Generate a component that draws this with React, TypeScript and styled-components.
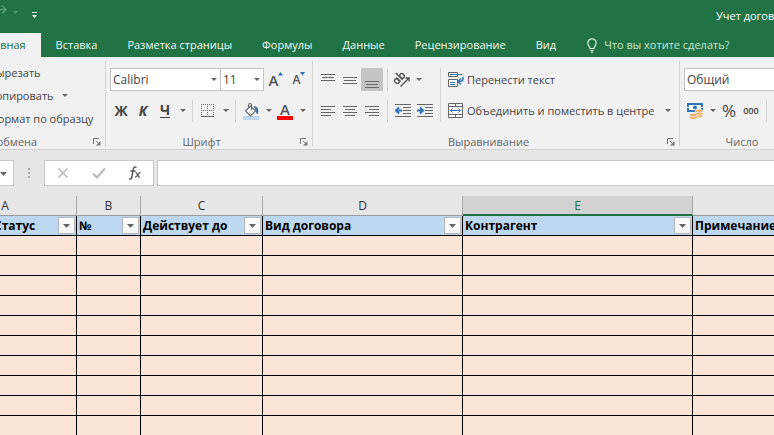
import React from "react";
import styled, { createGlobalStyle, css } from "styled-components";

const green = "#217346";
const ink = "#444444";
const stroke = "#666666";
const blue = "#2e75b6";

const GlobalStyle = createGlobalStyle`
  *, *::before, *::after { box-sizing: border-box; }
  html, body { margin: 0; height: 100%; overflow: hidden; background: #e6e6e6; }
  body, button, input, select {
    font-family: "Open Sans", "Noto Sans", sans-serif;
    font-size: 11px;
    line-height: 16px;
    color: ${ink};
  }
  button, input, select { margin: 0; padding: 0; border: 0; border-radius: 0; background: none; }
`;

const Window = styled.div`
  display: flex;
  flex-direction: column;
  min-height: 100vh;
  overflow: hidden;
`;

const TitleBar = styled.header`
  display: flex;
  justify-content: space-between;
  height: 33px;
  background: ${green};
  color: #ffffff;
`;

const QuickAccess = styled.div`
  display: flex;
  align-items: flex-start;
`;

const QuickButton = styled.button<{ $width: number }>`
  display: flex;
  width: ${(p) => p.$width}px;
  height: 24px;
`;

const Title = styled.h1`
  width: 58px;
  margin: 8px 0 0;
  overflow: hidden;
  white-space: nowrap;
  font-size: 11px;
  font-weight: 400;
`;

const Tabs = styled.nav`
  display: flex;
  height: 24px;
  margin-left: -33px;
  background: ${green};
`;

const Tab = styled.button<{ $active?: boolean }>`
  flex: none;
  padding: 0 15px;
  white-space: nowrap;
  color: ${(p) => (p.$active ? green : "#f0f8f3")};
  background: ${(p) => (p.$active ? "#f1f1f1" : "transparent")};
`;

const TellMe = styled.button`
  display: flex;
  align-items: center;
  gap: 7px;
  padding-left: 16px;
  white-space: nowrap;
  color: #c3e6d0;
`;

const Ribbon = styled.div`
  display: flex;
  height: 93px;
  margin-left: -92px;
  padding-top: 4px;
  background: #f1f1f1;
  border-bottom: 1px solid #d0d0d0;
`;

const Group = styled.section<{ $width: number; $indent: number }>`
  display: flex;
  flex: none;
  flex-direction: column;
  justify-content: space-between;
  width: ${(p) => p.$width}px;
  height: 85px;
  padding: 7px 0 0 ${(p) => p.$indent}px;
  border-right: 1px solid #d4d4d4;
`;

const Caption = styled.footer<{ $indent: number }>`
  display: flex;
  align-items: center;
  height: 16px;
  margin: 0 2px -4px -${(p) => p.$indent}px;
  color: #666666;
`;

const CaptionText = styled.span`
  flex: 1;
  text-align: center;
`;

const Launcher = styled.button`
  display: flex;
  width: 13px;
  justify-content: center;
`;

const CommandList = styled.div`
  display: flex;
  flex-direction: column;
  margin-top: -7px;
`;

const CommandRow = styled.div`
  display: flex;
  align-items: center;
  gap: 5px;
  height: 23px;
`;

const Command = styled.button`
  white-space: nowrap;
`;

const Rows = styled.div`
  display: flex;
  flex-direction: column;
  gap: 8px;
`;

const Row = styled.div`
  display: flex;
  align-items: center;
  height: 23px;
`;

const Columns = styled.div`
  display: flex;
`;

const Tool = styled.button<{ $width?: number; $pressed?: boolean }>`
  display: flex;
  flex: none;
  align-items: center;
  justify-content: center;
  width: ${(p) => p.$width ?? 22}px;
  height: 23px;
  background: ${(p) => (p.$pressed ? "#c5c5c5" : "transparent")};
`;

const Glyph = styled.span<{ $kind?: "bold" | "italic" | "underline" | "small" | "percent" }>`
  font-size: 14px;
  line-height: 14px;
  font-weight: 700;
  ${(p) => p.$kind === "italic" && css`font-style: italic;`}
  ${(p) => p.$kind === "underline" && css`border-bottom: 1px solid ${ink};`}
  ${(p) => p.$kind === "small" && css`font-size: 9px; font-weight: 600;`}
  ${(p) => p.$kind === "percent" && css`font-size: 17px; font-weight: 400;`}
`;

const SizeLetter = styled.span<{ $large?: boolean }>`
  font-size: ${(p) => (p.$large ? 15 : 12)}px;
  line-height: 18px;
  font-weight: 600;
  padding-top: 1px;
  color: #555555;
`;

const SizeArrow = styled.svg`
  align-self: flex-start;
  margin-top: 4px;
`;

const ColorLetter = styled.span`
  width: 16px;
  height: 18px;
  border-bottom: 4px solid #ff0000;
  text-align: center;
  font-size: 15px;
  line-height: 15px;
  font-weight: 600;
  color: #555555;
`;

const WideTool = styled.button<{ $width?: number }>`
  display: flex;
  align-items: center;
  gap: 3px;
  width: ${(p) => (p.$width ? `${p.$width}px` : "auto")};
  height: 23px;
  padding: 0 4px 0 3px;
  white-space: nowrap;
`;

const Divider = styled.i`
  flex: none;
  width: 1px;
  height: 22px;
  margin: 0 4px;
  background: #d4d4d4;
`;

const TallDivider = styled(Divider)`
  height: 54px;
`;

const Combo = styled.span<{ $width: number }>`
  display: grid;
  flex: none;
  width: ${(p) => p.$width}px;
  height: 23px;
  align-items: center;
  & + & { margin-left: -1px; }
  > * { grid-area: 1 / 1; }
  > svg { justify-self: end; margin-right: 2px; pointer-events: none; }
`;

const Select = styled.select`
  appearance: none;
  width: 100%;
  height: 23px;
  padding-left: 2px;
  font-size: 12px;
  border: 1px solid #c3c3c3;
  background: #ffffff;
`;

const FormulaBar = styled.div`
  display: flex;
  height: 46px;
  padding-top: 10px;
  background: #e6e6e6;
`;

const Panel = styled.div`
  display: flex;
  align-items: center;
  height: 26px;
  border: 1px solid #c8c8c8;
  background: #ffffff;
`;

const NameBox = styled(Panel)`
  width: 14px;
  border: 1px solid #c8c8c8;
  border-left: 0;
  background: #ffffff;
  justify-content: center;
  padding-right: 6px;
  > svg { flex: none; }
`;

const Grip = styled.div`
  display: flex;
  width: 30px;
  height: 26px;
  align-items: center;
  justify-content: center;
`;

const EditPanel = styled(Panel)`
  width: 110px;
  padding: 0 7px;
  margin-right: 3px;
  justify-content: space-between;
`;

const FormulaInput = styled.input`
  flex: 1;
  height: 26px;
  min-width: 0;
  padding: 0 6px;
  border: 1px solid #c8c8c8;
  border-right: 0;
  background: #ffffff;
`;

const Sheet = styled.table`
  width: 1000px;
  margin-left: -66px;
  table-layout: fixed;
  border-collapse: separate;
  border-spacing: 0;
  color: #000000;
`;

const ColumnLetter = styled.th<{ $selected?: boolean }>`
  height: 20px;
  padding: 0;
  font-size: 12px;
  line-height: 17px;
  font-weight: 400;
  border-right: 1px solid #a8a8a8;
  border-bottom: ${(p) => (p.$selected ? `2px solid ${green}` : "1px solid #9b9b9b")};
  color: ${(p) => (p.$selected ? green : "#333333")};
  background: ${(p) => (p.$selected ? "#d2d2d2" : "#e6e6e6")};
`;

const HeaderCell = styled.td`
  height: 20px;
  padding: 0;
  border-right: 1px solid #000000;
  border-bottom: 1px solid #000000;
  background: #bdd7ee;
`;

const HeaderContent = styled.div<{ $end?: boolean }>`
  display: flex;
  align-items: center;
  justify-content: space-between;
  height: 19px;
  padding: 0 1px 0 2px;
  overflow: hidden;
  white-space: nowrap;
  font-size: 12px;
  line-height: 18px;
  font-weight: 700;
  ${(p) => p.$end && css`padding-left: 60px;`}
`;

const FilterButton = styled.button`
  display: flex;
  flex: none;
  align-items: center;
  justify-content: center;
  width: 17px;
  height: 17px;
  border: 1px solid #b4b8bd;
  background: linear-gradient(#ffffff, #f3f4f6);
`;

const Cell = styled.td`
  height: 20px;
  padding: 0;
  border-right: 1px solid #000000;
  border-bottom: 1px solid #000000;
  background: #fce4d6;
`;

const Arrow = ({ large }: { large?: boolean }) => (
  <svg width="11" height="7" viewBox="0 0 11 7" aria-hidden="true">
    <path d={large ? "M2 2h7L5.500 6z" : "M3 2h6L6 5z"} fill="#666666" />
  </svg>
);

const DropTool = ({ label }: { label: string }) => (
  <Tool $width={12} aria-label={label}>
    <Arrow />
  </Tool>
);

const Lines = ({ rows, top = 0 }: { rows: [number, number][]; top?: number }) => (
  <svg width="14" height="18" viewBox="0 0 14 18" aria-hidden="true">
    {rows.map(([x, w], i) => (
      <rect key={i} x={x} y={top + i * 3} width={w} height="1" fill={stroke} />
    ))}
  </svg>
);

const LauncherIcon = () => (
  <svg width="8" height="8" viewBox="0 0 8 8" fill="none" stroke="#777777" aria-hidden="true">
    <path d="M.5 6V.5H6M3 3l3 3" />
    <path d="M7.5 3v4.5H3z" fill="#777777" stroke="none" />
  </svg>
);

const FontSizeIcon = ({ grow }: { grow?: boolean }) => (
  <>
    <SizeLetter $large={grow}>A</SizeLetter>
    <SizeArrow width="5" height="4" viewBox="0 0 5 4" aria-hidden="true">
      <path d={grow ? "M0 3.500 2.500 0 5 3.500z" : "M0 0h5L2.500 3.500z"} fill={blue} />
    </SizeArrow>
  </>
);

const BordersIcon = () => (
  <svg width="14" height="14" viewBox="0 0 14 14" fill="none" stroke={stroke} aria-hidden="true">
    <path d="M.5 0v13M6.5 0v13M12.5 0v13M0 .5h13M0 6.5h13" strokeDasharray="1 1" />
    <path d="M0 12.5h13" />
  </svg>
);

const FillIcon = () => (
  <svg width="16" height="18" viewBox="0 0 16 18" fill="none" aria-hidden="true">
    <rect y="14" width="16" height="4" fill="#bdd7ee" />
    <path d="M10.500 4c4 0 5.500 3 4.500 8-1.500 0-2-1-2.500-4z" fill="#41719c" />
    <path d="M2.500 9 7.500 4l5 5-5 5z" fill="#ffffff" stroke="#6b6b6b" strokeWidth="1.200" />
    <path d="M5.500 6V3c0-2 3-2 3 0v5" stroke="#6b6b6b" strokeWidth="1.200" />
  </svg>
);

const OrientationIcon = () => (
  <svg width="18" height="18" viewBox="0 0 18 18" fill="none" stroke="#555555" strokeWidth="1.400" aria-hidden="true">
    <g transform="rotate(-45 6 8)">
      <ellipse cx="3" cy="8" rx="2" ry="2.500" />
      <path d="M5.300 5v6M8 1.500V11" />
      <ellipse cx="10.300" cy="8" rx="2" ry="2.500" />
    </g>
    <path d="M7.500 15.500 15.500 7.500M12.500 7h3.500v3.500" />
  </svg>
);

const IndentIcon = ({ increase }: { increase?: boolean }) => (
  <svg width="16" height="14" viewBox="0 0 16 14" fill="none" aria-hidden="true">
    <path d="M0 .5h16M8 3.500h8M8 6.500h8M8 9.500h8M0 12.500h16" stroke={stroke} />
    {increase ? (
      <path d="M0 6.500h6M3 3.500l3 3-3 3" stroke={blue} strokeWidth="2" />
    ) : (
      <path d="M7 6.500H1.500M4 3.500l-3 3 3 3" stroke={blue} strokeWidth="2" />
    )}
  </svg>
);

const WrapIcon = () => (
  <svg width="16" height="16" viewBox="0 0 16 16" fill="none" aria-hidden="true">
    <path d="M.5.5h9v4h-9zM.5 7.500h9v7h-9z" fill="#ffffff" stroke={stroke} />
    <path d="M2 2.500h12M2 10.500h5M2 12.500h5" stroke={blue} />
    <path d="M15 5v2c0 1.500-1 2.500-4 2.500M13 6.500l-3 3 3 3" stroke={blue} strokeWidth="1.500" />
  </svg>
);

const MergeIcon = () => (
  <svg width="16" height="16" viewBox="0 0 16 16" fill="none" aria-hidden="true">
    <path d="M.5.5h14v14H.5z" fill="#ffffff" stroke={stroke} />
    <path d="M0 3.500h15M0 11.500h15M7.500 0v3.500M7.500 11.500V15" stroke={stroke} />
    <path d="M2 7.500h11M4.500 5.500l-2 2 2 2M10.500 5.500l2 2-2 2" stroke={blue} />
  </svg>
);

const MoneyIcon = () => (
  <svg width="16" height="18" viewBox="0 0 16 18" fill="none" aria-hidden="true">
    <path d="M1 2h14v7H1z" fill="#ffffff" stroke={blue} strokeWidth="2" />
    <circle cx="8" cy="5.500" r="2" fill={blue} />
    <path d="M0 5.500h3M13 5.500h3" stroke="#f1f1f1" />
    <g fill="#e8b36b" stroke="#f1f1f1" strokeWidth=".6">
      <ellipse cx="12" cy="14" rx="4" ry="1.800" />
      <ellipse cx="12" cy="11.500" rx="4" ry="1.800" />
      <ellipse cx="12" cy="9" rx="4" ry="1.800" />
      <ellipse cx="6.500" cy="15.500" rx="4" ry="1.800" />
      <ellipse cx="6.500" cy="13" rx="4" ry="1.800" />
    </g>
  </svg>
);

const BulbIcon = () => (
  <svg width="10" height="15" viewBox="0 0 10 15" fill="none" stroke="#d5eedf" strokeWidth="1.200" aria-hidden="true">
    <path d="M3 10.500C3 8.500.8 7.500.8 5a4.200 4.200 0 0 1 8.400 0c0 2.500-2.200 3.500-2.200 5.500zM3 12.500h4M4 14.300h2" />
  </svg>
);

const ColumnSizes = [143, 64, 122, 200, 230, 241];
const Letters = ["A", "B", "C", "D", "E", "F"];
const Headers = ["Статус", "№", "Действует до", "Вид договора", "Контрагент", "Примечание"];

const GroupCaption = ({ text, indent }: { text: string; indent: number }) => (
  <Caption $indent={indent}>
    <CaptionText>{text}</CaptionText>
    <Launcher aria-label={`${text}: параметры`}>
      <LauncherIcon />
    </Launcher>
  </Caption>
);

export default function App() {
  return (
    <Window>
      <GlobalStyle />
      <TitleBar>
        <QuickAccess>
          <QuickButton $width={20} aria-label="Вернуть">
            <svg width="20" height="24" viewBox="0 0 20 24" fill="none" aria-hidden="true">
              <path d="M0 9.500h6M2 5.500l4 4-4 4" stroke="#559b74" strokeWidth="1.600" />
              <path d="M13 11h5l-2.500 3z" fill="#559b74" />
            </svg>
          </QuickButton>
          <QuickButton $width={30} aria-label="Настройка панели быстрого доступа">
            <svg width="30" height="24" viewBox="0 0 30 24" fill="none" aria-hidden="true">
              <path d="M12 12.500h5" stroke="#ffffff" />
              <path d="M12 15h5l-2.500 3z" fill="#ffffff" />
            </svg>
          </QuickButton>
        </QuickAccess>
        <Title>Учет договоров</Title>
      </TitleBar>

      <Tabs>
        <Tab $active>Главная</Tab>
        <Tab>Вставка</Tab>
        <Tab>Разметка страницы</Tab>
        <Tab>Формулы</Tab>
        <Tab>Данные</Tab>
        <Tab>Рецензирование</Tab>
        <Tab>Вид</Tab>
        <TellMe>
          <BulbIcon />
          Что вы хотите сделать?
        </TellMe>
      </Tabs>

      <Ribbon>
        <Group $width={198} $indent={81}>
          <CommandList>
            <CommandRow>
              <Command>Вырезать</Command>
            </CommandRow>
            <CommandRow>
              <Command>Копировать</Command>
              <Arrow />
            </CommandRow>
            <CommandRow>
              <Command>Формат по образцу</Command>
            </CommandRow>
          </CommandList>
          <GroupCaption text="Буфер обмена" indent={81} />
        </Group>

        <Group $width={207} $indent={4}>
          <Rows>
            <Row>
              <Combo $width={111}>
                <Select aria-label="Шрифт">
                  <option>Calibri</option>
                </Select>
                <Arrow />
              </Combo>
              <Combo $width={44}>
                <Select aria-label="Размер шрифта">
                  <option>11</option>
                </Select>
                <Arrow />
              </Combo>
              <Tool $width={24} aria-label="Увеличить размер шрифта">
                <FontSizeIcon grow />
              </Tool>
              <Tool aria-label="Уменьшить размер шрифта">
                <FontSizeIcon />
              </Tool>
            </Row>
            <Row>
              <Tool aria-label="Полужирный">
                <Glyph $kind="bold">Ж</Glyph>
              </Tool>
              <Tool aria-label="Курсив">
                <Glyph $kind="italic">К</Glyph>
              </Tool>
              <Tool aria-label="Подчеркнутый">
                <Glyph $kind="underline">Ч</Glyph>
              </Tool>
              <DropTool label="Вид подчеркивания" />
              <Divider />
              <Tool aria-label="Границы">
                <BordersIcon />
              </Tool>
              <DropTool label="Вид границ" />
              <Divider />
              <Tool aria-label="Цвет заливки">
                <FillIcon />
              </Tool>
              <DropTool label="Выбор цвета заливки" />
              <Tool aria-label="Цвет шрифта">
                <ColorLetter>A</ColorLetter>
              </Tool>
              <DropTool label="Выбор цвета шрифта" />
            </Row>
          </Rows>
          <GroupCaption text="Шрифт" indent={4} />
        </Group>

        <Group $width={367} $indent={4}>
          <Columns>
            <Rows>
              <Row>
                <Tool aria-label="По верхнему краю">
                  <Lines top={3} rows={[[0, 14], [1, 12], [0, 14]]} />
                </Tool>
                <Tool aria-label="По середине">
                  <Lines top={6} rows={[[0, 14], [1, 12], [0, 14]]} />
                </Tool>
                <Tool $pressed aria-label="По нижнему краю">
                  <Lines top={10} rows={[[0, 14], [1, 12], [0, 14]]} />
                </Tool>
                <Divider />
                <Tool $width={20} aria-label="Ориентация">
                  <OrientationIcon />
                </Tool>
                <DropTool label="Выбор ориентации" />
              </Row>
              <Row>
                <Tool aria-label="По левому краю">
                  <Lines top={4} rows={[[0, 14], [0, 10], [0, 14], [0, 10]]} />
                </Tool>
                <Tool aria-label="По центру">
                  <Lines top={4} rows={[[0, 14], [2, 10], [0, 14], [2, 10]]} />
                </Tool>
                <Tool aria-label="По правому краю">
                  <Lines top={4} rows={[[0, 14], [4, 10], [0, 14], [4, 10]]} />
                </Tool>
                <Divider />
                <Tool aria-label="Уменьшить отступ">
                  <IndentIcon />
                </Tool>
                <Tool aria-label="Увеличить отступ">
                  <IndentIcon increase />
                </Tool>
              </Row>
            </Rows>
            <TallDivider />
            <Rows>
              <Row>
                <WideTool>
                  <WrapIcon />
                  Перенести текст
                </WideTool>
              </Row>
              <Row>
                <WideTool $width={216}>
                  <MergeIcon />
                  Объединить и поместить в центре
                </WideTool>
                <DropTool label="Варианты объединения" />
              </Row>
            </Rows>
          </Columns>
          <GroupCaption text="Выравнивание" indent={4} />
        </Group>

        <Group $width={140} $indent={4}>
          <Rows>
            <Row>
              <Combo $width={130}>
                <Select aria-label="Числовой формат">
                  <option>Общий</option>
                </Select>
                <Arrow />
              </Combo>
            </Row>
            <Row>
              <Tool aria-label="Финансовый формат">
                <MoneyIcon />
              </Tool>
              <DropTool label="Выбор финансового формата" />
              <Tool aria-label="Процентный формат">
                <Glyph $kind="percent">%</Glyph>
              </Tool>
              <Tool aria-label="Формат с разделителями">
                <Glyph $kind="small">000</Glyph>
              </Tool>
              <Divider />
            </Row>
          </Rows>
          <GroupCaption text="Число" indent={4} />
        </Group>
      </Ribbon>

      <FormulaBar>
        <NameBox as="button" aria-label="Поле имени">
          <Arrow large />
        </NameBox>
        <Grip>
          <svg width="2" height="12" viewBox="0 0 2 12" fill="#a6a6a6" aria-hidden="true">
            <path d="M0 1h2v2H0zM0 5h2v2H0zM0 9h2v2H0z" />
          </svg>
        </Grip>
        <EditPanel>
          <Tool aria-label="Отмена">
            <svg width="12" height="12" viewBox="0 0 12 12" stroke="#bcbcbc" strokeWidth="1.700" aria-hidden="true">
              <path d="M1.500 1.500l9 9M10.500 1.500l-9 9" />
            </svg>
          </Tool>
          <Tool aria-label="Ввод">
            <svg width="14" height="12" viewBox="0 0 14 12" fill="none" stroke="#bcbcbc" strokeWidth="2.200" aria-hidden="true">
              <path d="M1 6.500l4 4L13 1.500" />
            </svg>
          </Tool>
          <Tool aria-label="Вставить функцию">
            <svg width="14" height="16" viewBox="0 0 14 16" fill="none" stroke="#555555" aria-hidden="true">
              <path d="M8.500 2.500c-2-1.500-3 .2-3.300 2L3.800 12c-.3 1.800-1.300 2.500-2.800 1.700" strokeWidth="1.500" />
              <path d="M2.500 6h5M7.500 7.500c2-.8 2 5.500 4.500 4.500M12.500 7.500c-1.500-.5-3.500 5-5.500 4.500" strokeWidth="1.300" />
            </svg>
          </Tool>
        </EditPanel>
        <FormulaInput aria-label="Строка формул" />
      </FormulaBar>

      <Sheet>
        <colgroup>
          {ColumnSizes.map((width, i) => (
            <col key={i} width={width} />
          ))}
        </colgroup>
        <thead>
          <tr>
            {Letters.map((letter) => (
              <ColumnLetter key={letter} scope="col" $selected={letter === "E"}>
                {letter}
              </ColumnLetter>
            ))}
          </tr>
        </thead>
        <tbody>
          <tr>
            {Headers.map((text, i) => (
              <HeaderCell key={text}>
                <HeaderContent $end={i === 0}>
                  {text}
                  <FilterButton aria-label={`Фильтр: ${text}`}>
                    <Arrow large />
                  </FilterButton>
                </HeaderContent>
              </HeaderCell>
            ))}
          </tr>
          {Array.from({ length: 10 }, (_, row) => (
            <tr key={row}>
              {Letters.map((letter) => (
                <Cell key={letter} />
              ))}
            </tr>
          ))}
        </tbody>
      </Sheet>
    </Window>
  );
}
